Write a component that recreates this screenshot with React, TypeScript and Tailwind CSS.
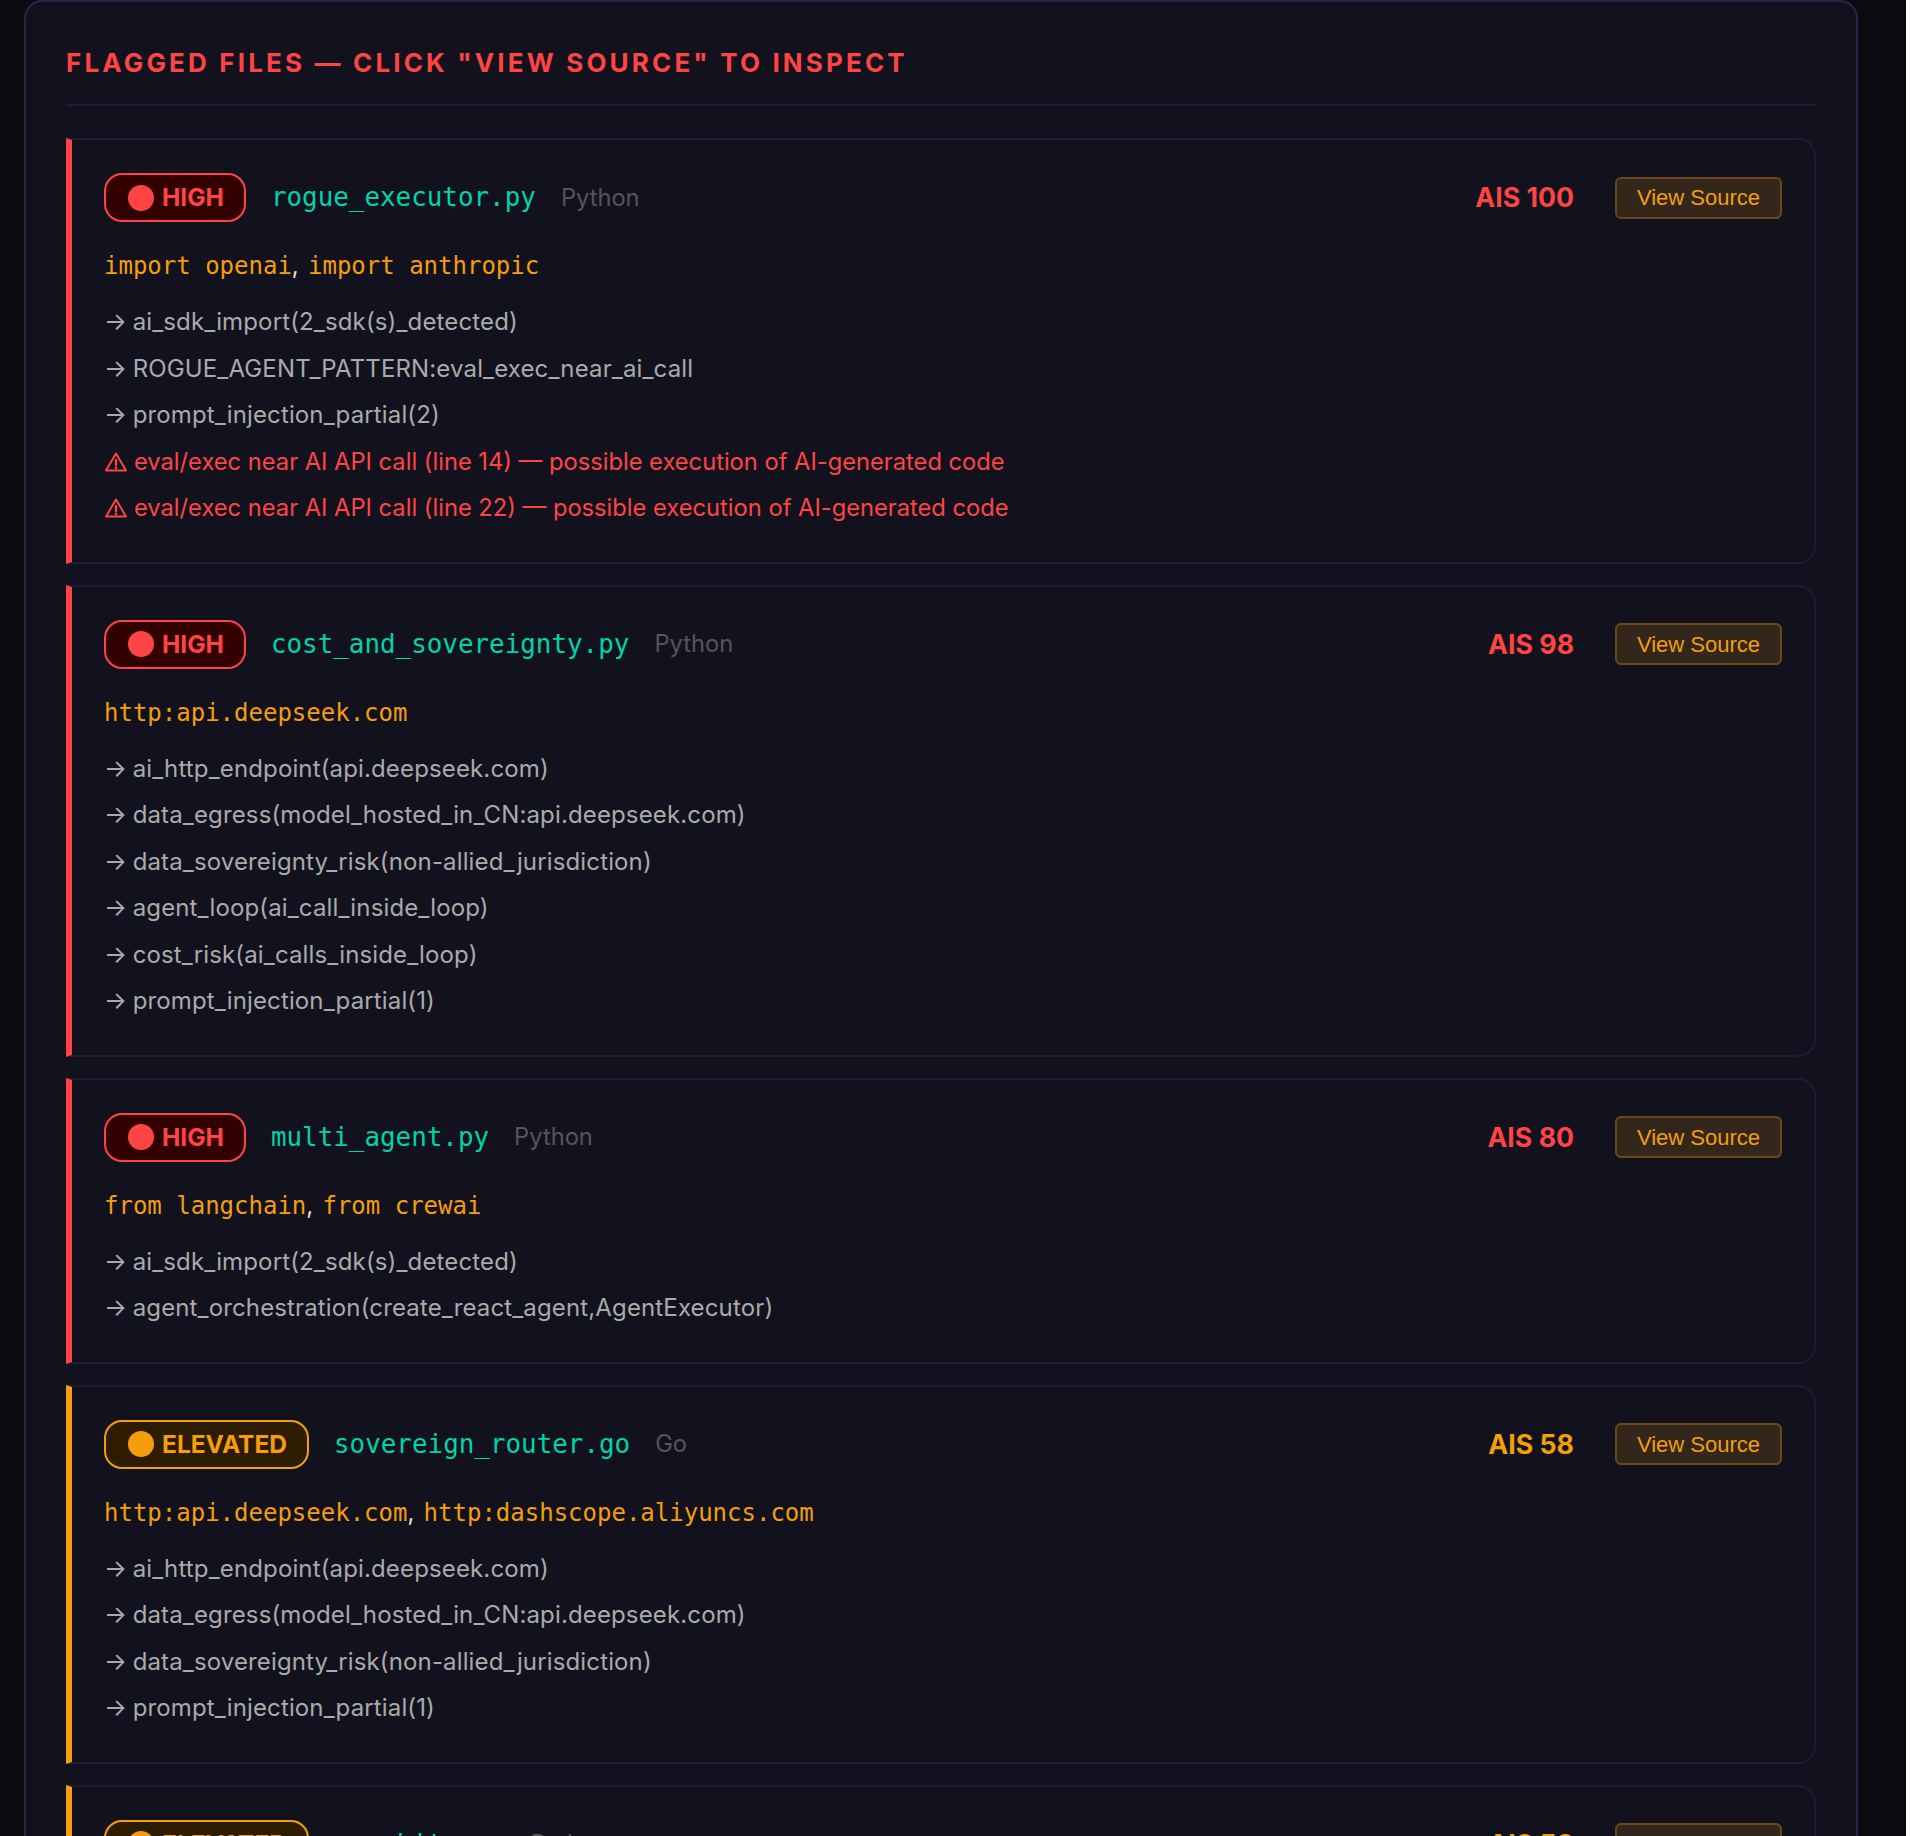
import { Fragment } from "react";

type Finding = { text: string; warn?: boolean };

type FlaggedFile = {
  level: "HIGH" | "ELEVATED";
  name: string;
  lang: string;
  score: number;
  patterns: string[];
  findings: Finding[];
};

const files: FlaggedFile[] = [
  {
    level: "HIGH",
    name: "rogue_executor.py",
    lang: "Python",
    score: 100,
    patterns: ["import openai", "import anthropic"],
    findings: [
      { text: "ai_sdk_import(2_sdk(s)_detected)" },
      { text: "ROGUE_AGENT_PATTERN:eval_exec_near_ai_call" },
      { text: "prompt_injection_partial(2)" },
      { text: "eval/exec near AI API call (line 14) — possible execution of AI-generated code", warn: true },
      { text: "eval/exec near AI API call (line 22) — possible execution of AI-generated code", warn: true },
    ],
  },
  {
    level: "HIGH",
    name: "cost_and_sovereignty.py",
    lang: "Python",
    score: 98,
    patterns: ["http:api.deepseek.com"],
    findings: [
      { text: "ai_http_endpoint(api.deepseek.com)" },
      { text: "data_egress(model_hosted_in_CN:api.deepseek.com)" },
      { text: "data_sovereignty_risk(non-allied_jurisdiction)" },
      { text: "agent_loop(ai_call_inside_loop)" },
      { text: "cost_risk(ai_calls_inside_loop)" },
      { text: "prompt_injection_partial(1)" },
    ],
  },
  {
    level: "HIGH",
    name: "multi_agent.py",
    lang: "Python",
    score: 80,
    patterns: ["from langchain", "from crewai"],
    findings: [
      { text: "ai_sdk_import(2_sdk(s)_detected)" },
      { text: "agent_orchestration(create_react_agent,AgentExecutor)" },
    ],
  },
  {
    level: "ELEVATED",
    name: "sovereign_router.go",
    lang: "Go",
    score: 58,
    patterns: ["http:api.deepseek.com", "http:dashscope.aliyuncs.com"],
    findings: [
      { text: "ai_http_endpoint(api.deepseek.com)" },
      { text: "data_egress(model_hosted_in_CN:api.deepseek.com)" },
      { text: "data_sovereignty_risk(non-allied_jurisdiction)" },
      { text: "prompt_injection_partial(1)" },
    ],
  },
  {
    level: "ELEVATED",
    name: "openkits.py",
    lang: "Python",
    score: 58,
    patterns: [],
    findings: [],
  },
];

function WarnIcon() {
  return (
    <svg viewBox="0 0 24 24" className="mr-[6px] h-[24px] w-[24px] shrink-0" fill="none" stroke="currentColor" strokeWidth="2" strokeLinejoin="round" strokeLinecap="round">
      <path d="M12 3.5 2 20.5h20L12 3.5Z" />
      <path d="M12 10v5" strokeWidth="2.4" />
      <path d="M12 17.9v.1" strokeWidth="2.6" />
    </svg>
  );
}

function FileCard({ file }: { file: FlaggedFile }) {
  const high = file.level === "HIGH";

  return (
    <div
      className={[
        "rounded-r-[18px] border-2 border-l-[6px] border-[#1e1b36] bg-[#12121e] pt-[33px] pr-[32px] pb-[30px] pl-[32px]",
        high ? "border-l-[#ff4444]" : "border-l-[#f59e0b]",
      ].join(" ")}
    >
      <div className="flex h-[49px] items-center">
        <span
          className={[
            "flex h-[49px] items-center rounded-[18px] border-2 pl-[22px] pr-[20px] text-[24.5px] font-bold",
            high ? "border-[#ff4444] bg-[#330000] text-[#ff4444]" : "border-[#f59e0b] bg-[#2e1c00] text-[#f59e0b]",
          ].join(" ")}
        >
          <span className={["mr-[8px] h-[26px] w-[26px] rounded-full", high ? "bg-[#ff4444]" : "bg-[#f59e0b]"].join(" ")} />
          {file.level}
        </span>
        <span className="ml-[25px] font-['DejaVu_Sans_Mono',monospace] text-[25.9px] text-[#00d4aa]">{file.name}</span>
        <span className="ml-[25px] text-[23.7px] text-[#555555]">{file.lang}</span>
        <span className={["ml-auto text-[26.7px] font-bold", high ? "text-[#ff4444]" : "text-[#f59e0b]"].join(" ")}>
          AIS {file.score}
        </span>
        <button className="ml-[41px] h-[42px] w-[167px] rounded-[6px] border-2 border-[#6b4716] bg-[#33261b] font-['Liberation_Sans',sans-serif] text-[22px] text-[#f59e0b]">
          View Source
        </button>
      </div>

      <div className="mt-[21px] h-[46px] font-['DejaVu_Sans_Mono',monospace] text-[24px] leading-[46px] text-[#f59e0b]">
        {file.patterns.map((p, i) => (
          <Fragment key={p}>
            {i > 0 && <span className="mr-[2.5px] font-['Inter',sans-serif] text-[#e0e0e0]">, </span>}
            {p}
          </Fragment>
        ))}
      </div>

      <div className="mt-[10px] flex flex-col text-[24px] leading-[46.5px]">
        {file.findings.map((f, i) =>
          f.warn ? (
            <div key={i} className="flex items-center text-[23.7px] text-[#ff4444]">
              <WarnIcon />
              {f.text}
            </div>
          ) : (
            <div key={i} className="tracking-[0.14px] text-[#aaaaaa]">
              <span className="tracking-[-0.5px]">→ </span>
              {f.text}
            </div>
          ),
        )}
      </div>
    </div>
  );
}

export default function App() {
  return (
    <div className="h-[1836px] w-[1912px] overflow-hidden bg-white font-['Inter',sans-serif]">
      <div className="mr-[6px] h-full bg-[#0a0a0f] pl-[24px] pr-[48px]">
        <div className="rounded-[18px] border-2 border-[#26264a] bg-[#12121e] px-[40px] pt-[43px]">
          <h2 className="border-b-2 border-[#1e1b36] pb-[24px] text-[26px] font-bold leading-[35px] tracking-[3.16px] text-[#ff4444]">
            FLAGGED FILES — CLICK "VIEW SOURCE" TO INSPECT
          </h2>
          <div className="mt-[32px] flex flex-col gap-[21px]">
            {files.map((f) => (
              <FileCard key={f.name} file={f} />
            ))}
          </div>
        </div>
      </div>
    </div>
  );
}
